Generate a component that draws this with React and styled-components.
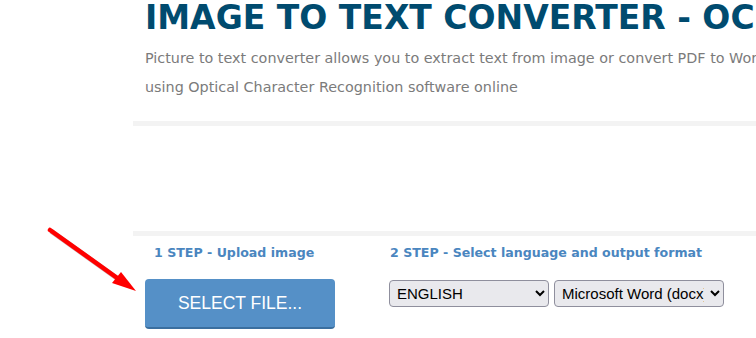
import React from "react";
import styled, { createGlobalStyle } from "styled-components";

const GlobalStyle = createGlobalStyle`
  html, body {
    margin: 0;
    padding: 0;
    background: #fff;
    overflow: hidden;
  }
  body {
    font-family: "DejaVu Sans", Verdana, sans-serif;
  }
`;

const Page = styled.div`
  position: relative;
  width: 900px;
  padding-left: 133px;
`;

const Header = styled.header`
  padding: 0 12px;
`;

const Title = styled.h1`
  margin: 0;
  font-family: "DejaVu Sans", Verdana, sans-serif;
  font-weight: bold;
  font-size: 33px;
  line-height: 36px;
  color: #004b6f;
  white-space: nowrap;
`;

const Lead = styled.p`
  margin: 8px 0 0;
  font-size: 14.35px;
  line-height: 29px;
  color: #7b7b7b;
  width: 660px;
`;

const Divider = styled.div`
  height: 5px;
  background: #f3f3f3;
  margin-top: ${({ $top }) => $top || 0}px;
`;

const UploadArea = styled.div`
  height: 105px;
`;

const Steps = styled.div`
  display: flex;
  padding-left: 12px;
`;

const Step = styled.div`
  width: ${({ $width }) => $width}px;
  flex-shrink: 0;
`;

const StepLabel = styled.div`
  font-weight: bold;
  font-size: 12.6px;
  line-height: 16px;
  color: #4a86bf;
  padding: 9px 0 0 ${({ $indent }) => $indent || 0}px;
  white-space: nowrap;
`;

const SelectButton = styled.button`
  display: block;
  margin-top: 18px;
  width: 190px;
  height: 50px;
  border: none;
  border-bottom: 2px solid #3b6f9f;
  border-radius: 4px;
  background: #5590c7;
  color: #fff;
  font-family: "Liberation Sans", Arial, sans-serif;
  font-size: 17.5px;
  cursor: pointer;
`;

const Selects = styled.div`
  display: flex;
  gap: 5px;
  margin-top: 19px;
`;

const Select = styled.select`
  width: ${({ $width }) => $width}px;
  height: 27px;
  background: #e9e9ed;
  border: 1px solid #8f8f9d;
  border-radius: 4px;
  color: #000;
  font-family: "Liberation Sans", Arial, sans-serif;
  font-size: 15px;
  padding: 0 3px;
`;

const Arrow = styled.svg`
  position: absolute;
  left: 46px;
  top: 226px;
`;

export default function App() {
  return (
    <>
      <GlobalStyle />
      <Page>
        <Arrow width="96" height="70" viewBox="0 0 96 70">
          <line x1="4" y1="4" x2="74" y2="54" stroke="#6b1010" strokeWidth="5" opacity="0.35" transform="translate(1,1)" />
          <line x1="4" y1="4" x2="74" y2="54" stroke="#ff0000" strokeWidth="4.5" strokeLinecap="round" />
          <polygon points="90,65 75,46 66,57" fill="#ff0000" />
        </Arrow>
        <Header>
          <Title>IMAGE TO TEXT CONVERTER - OCR ONLINE</Title>
          <Lead>
            Picture to text converter allows you to extract text from image or
            convert PDF to Word using Optical Character Recognition software
            online
          </Lead>
        </Header>
        <Divider $top={19} />
        <UploadArea />
        <Divider />
        <Steps>
          <Step $width={244}>
            <StepLabel $indent={9}>1 STEP - Upload image</StepLabel>
            <SelectButton>SELECT FILE...</SelectButton>
          </Step>
          <Step $width={400}>
            <StepLabel $indent={1}>2 STEP - Select language and output format</StepLabel>
            <Selects>
              <Select $width={160} defaultValue="en">
                <option value="en">ENGLISH</option>
                <option value="fr">FRENCH</option>
              </Select>
              <Select $width={170} defaultValue="docx">
                <option value="docx">Microsoft Word (docx)</option>
                <option value="txt">Text Plain (txt)</option>
              </Select>
            </Selects>
          </Step>
        </Steps>
      </Page>
    </>
  );
}
